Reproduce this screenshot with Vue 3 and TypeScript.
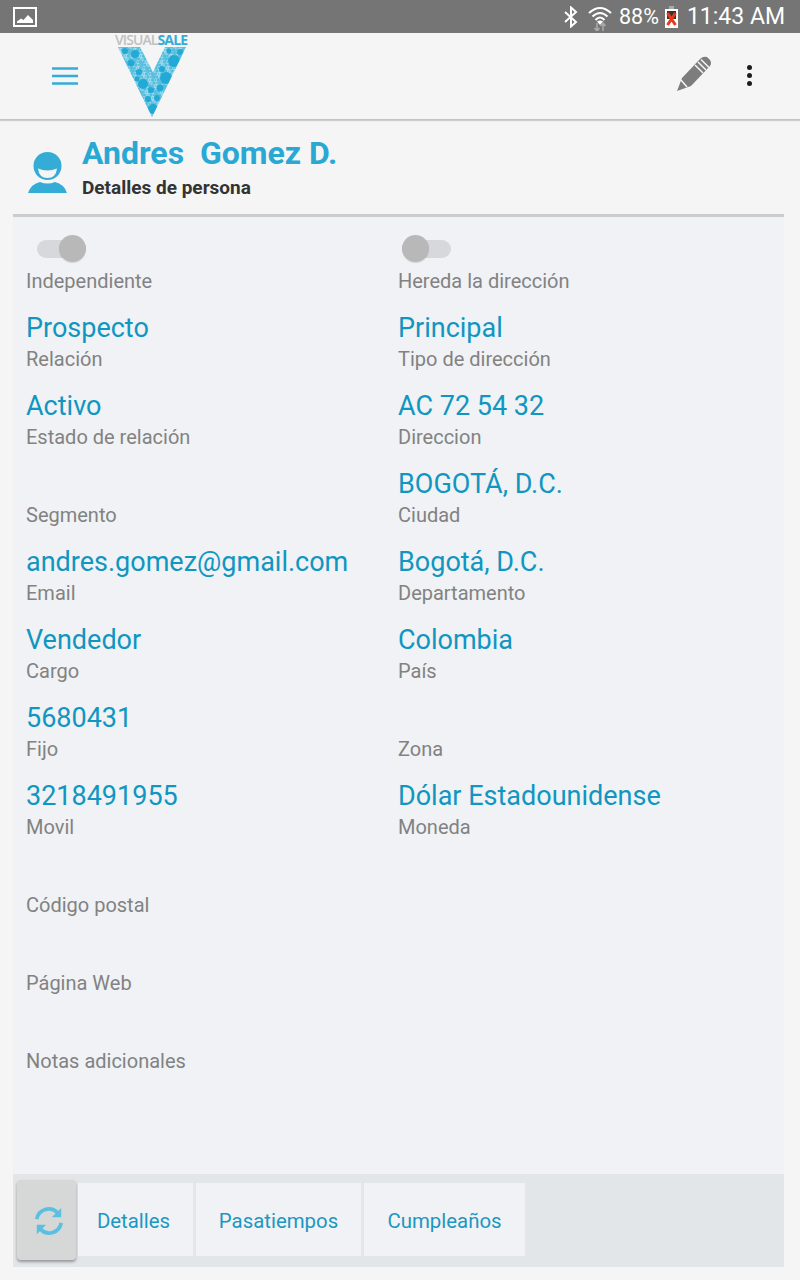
<template>
  <div class="screen">
    <div class="status-bar">
      <svg class="pic-icon" width="24" height="20" viewBox="0 0 24 20">
        <rect x="1" y="1" width="22" height="18" fill="none" stroke="#fff" stroke-width="2" />
        <path d="M4 16 L4 14.5 L8 11.5 L10.5 13 L15 8 L20 13 L20 16 Z" fill="#fff" />
      </svg>
      <div class="status-right">
        <svg width="14" height="22" viewBox="0 0 14 22">
          <path d="M1 6 L12 16 L7 20.5 L7 1.5 L12 6 L1 16" fill="none" stroke="#fff" stroke-width="2" />
        </svg>
        <svg class="wifi" width="24" height="26" viewBox="0 0 24 26">
          <path d="M1 8 Q12 -2 23 8 M4.5 11.5 Q12 4.5 19.5 11.5 M7.5 15 Q12 10 16.5 15" fill="none" stroke="#fff" stroke-width="2" />
          <path d="M12 20 L9 16.5 Q12 14.5 15 16.5 Z" fill="#fff" />
          <path d="M9 18 V26 M6.5 23 L9 26 L11.5 23 M15 26 V18 M12.5 21 L15 18 L17.5 21" fill="none" stroke="#aaa" stroke-width="1.6" />
        </svg>
        <span class="pct">88%</span>
        <svg class="battery" width="13" height="22" viewBox="0 0 13 22">
          <rect x="4" y="0" width="5" height="3" fill="#aaa" />
          <rect x="0" y="3" width="13" height="19" fill="#fff" />
          <rect x="2" y="5" width="9" height="8" fill="#333" />
          <path d="M2.5 7 L10.5 19 M10.5 7 L2.5 19" stroke="#e8391c" stroke-width="3" />
        </svg>
        <span class="clock">11:43 AM</span>
      </div>
    </div>

    <header class="toolbar">
      <div class="toolbar-left">
        <svg class="menu" width="26" height="18" viewBox="0 0 26 18">
          <path d="M0 1.5 H26 M0 9 H26 M0 16.5 H26" stroke="#35acd6" stroke-width="2.6" />
        </svg>
        <div class="logo">
          <div class="logo-text"><span class="grey">VISUAL</span><span class="blue">SALE</span></div>
          <svg width="74" height="72" viewBox="0 15 74 72">
            <defs>
              <clipPath id="v-shape">
                <polygon :points="vPoints" />
              </clipPath>
            </defs>
            <polygon :points="vPoints" fill="#a8dcec" />
            <g clip-path="url(#v-shape)">
              <circle v-for="(b, i) in bubbles" :key="i" :cx="b.x" :cy="b.y" :r="b.r" :fill="b.r > 2 ? '#22a9d6' : '#56bedf'" />
            </g>
          </svg>
        </div>
      </div>
      <div class="toolbar-right">
        <svg width="36" height="36" viewBox="0 0 36 36">
          <path d="M1 35 L6 22 L24 3 Q27 0 31 1 L34 4 Q36 7 34 10 L15 30 Z" fill="#7d7d7d" />
          <path d="M5 24 L11 31 M19 9 L27 17 M22 6 L30 14 M25 3.5 L33 11.5" stroke="#f5f5f5" stroke-width="1.5" fill="none" />
        </svg>
        <div class="dots"><i></i><i></i><i></i></div>
      </div>
    </header>

    <div class="title-row">
      <svg class="avatar" width="42" height="44" viewBox="0 0 42 44">
        <circle cx="21.5" cy="15" r="14" fill="#35acd6" />
        <path d="M12 17.5 Q21.5 21.5 31 17.5 Q30 27 21.5 27 Q13 27 12 17.5 Z" fill="#f5f5f5" />
        <path d="M2 42 Q5 33 14 31 Q21.5 34 29 31 Q38 33 41 42 Z" fill="#35acd6" />
      </svg>
      <div>
        <h1>Andres&nbsp; Gomez D.</h1>
        <p>Detalles de persona</p>
      </div>
    </div>

    <main class="panel">
      <div class="fields">
        <div class="column">
          <div class="switch-row"><span class="switch on"><i></i></span></div>
          <div class="label first">Independiente</div>
          <div v-for="f in leftFields" :key="f.label" class="field">
            <div class="value">{{ f.value }}</div>
            <div class="label">{{ f.label }}</div>
          </div>
        </div>
        <div class="column">
          <div class="switch-row"><span class="switch off"><i></i></span></div>
          <div class="label first">Hereda la dirección</div>
          <div v-for="f in rightFields" :key="f.label" class="field">
            <div class="value">{{ f.value }}</div>
            <div class="label">{{ f.label }}</div>
          </div>
        </div>
      </div>
      <nav class="tabs">
        <button class="refresh">
          <svg width="30" height="32" viewBox="0 0 32 34">
            <path d="M3 15 A13 13 0 0 1 25 8" fill="none" stroke="#5bbfe0" stroke-width="4" />
            <path d="M29 3 V13 H19 Z" fill="#5bbfe0" />
            <path d="M29 19 A13 13 0 0 1 7 26" fill="none" stroke="#5bbfe0" stroke-width="4" />
            <path d="M3 31 V21 H13 Z" fill="#5bbfe0" />
          </svg>
        </button>
        <button v-for="t in tabs" :key="t.name" class="tab" :style="{ width: t.width + 'px' }">{{ t.name }}</button>
      </nav>
    </main>
  </div>
</template>

<script setup lang="ts">
interface Field {
  value: string
  label: string
}

const leftFields: Field[] = [
  { value: 'Prospecto', label: 'Relación' },
  { value: 'Activo', label: 'Estado de relación' },
  { value: '', label: 'Segmento' },
  { value: 'andres.gomez@gmail.com', label: 'Email' },
  { value: 'Vendedor', label: 'Cargo' },
  { value: '5680431', label: 'Fijo' },
  { value: '3218491955', label: 'Movil' },
  { value: '', label: 'Código postal' },
  { value: '', label: 'Página Web' },
  { value: '', label: 'Notas adicionales' },
]

const rightFields: Field[] = [
  { value: 'Principal', label: 'Tipo de dirección' },
  { value: 'AC 72 54 32', label: 'Direccion' },
  { value: 'BOGOTÁ, D.C.', label: 'Ciudad' },
  { value: 'Bogotá, D.C.', label: 'Departamento' },
  { value: 'Colombia', label: 'País' },
  { value: '', label: 'Zona' },
  { value: 'Dólar Estadounidense', label: 'Moneda' },
]

const tabs = [
  { name: 'Detalles', width: 115 },
  { name: 'Pasatiempos', width: 165 },
  { name: 'Cumpleaños', width: 161 },
]

const vPoints = '3,15 25,15 38,40 50,15 71,15 37,85'

// burbujas del logo: las grandes a mano, las pequeñas en rejilla
const big = [
  { x: 20, y: 22, r: 4 }, { x: 59, y: 29, r: 6 }, { x: 16, y: 31, r: 3.5 }, { x: 51, y: 46, r: 6 },
  { x: 28, y: 52, r: 5 }, { x: 36, y: 58, r: 3 }, { x: 45, y: 56, r: 3.5 }, { x: 38, y: 77, r: 5 },
  { x: 42, y: 66, r: 3 }, { x: 33, y: 67, r: 3 }, { x: 65, y: 20, r: 3 }, { x: 24, y: 40, r: 3 },
  { x: 10, y: 19, r: 3 }, { x: 54, y: 19, r: 2.5 }, { x: 47, y: 37, r: 3 }, { x: 22, y: 47, r: 2.5 },
]
const small: { x: number; y: number; r: number }[] = []
for (let row = 0; row < 24; row++) {
  for (let col = 0; col < 25; col++) {
    small.push({ x: col * 3 + (row % 2) * 1.5, y: 15 + row * 3, r: 0.8 + ((row * 7 + col * 13) % 5) * 0.3 })
  }
}
const bubbles = [...small, ...big]
</script>

<style>
html, body {
  margin: 0;
  background: #f5f5f5;
}
</style>

<style scoped>
.screen {
  width: 800px;
  height: 1280px;
  background: #f5f5f5;
  font-family: Roboto, "Liberation Sans", sans-serif;
  overflow: hidden;
  display: flex;
  flex-direction: column;
}
.status-bar {
  height: 33px;
  flex: none;
  background: #757575;
  display: flex;
  align-items: center;
  justify-content: space-between;
  padding: 0 15px 0 13px;
  color: #fff;
}
.status-right { display: flex; align-items: center; }
.wifi { margin-left: 10px; margin-top: 3px; }
.pct { font-size: 21.5px; margin-left: 7px; }
.battery { margin-left: 6px; }
.clock { font-size: 23px; margin-left: 9px; }
.toolbar {
  height: 86px;
  flex: none;
  background: #f5f5f5;
  border-bottom: 1px solid #c4c4c4;
  box-shadow: 0 1px 1px rgba(0, 0, 0, 0.16);
  display: flex;
  justify-content: space-between;
  align-items: flex-start;
  position: relative;
}
.toolbar-left { display: flex; align-items: flex-start; }
.menu { margin: 34px 0 0 52px; }
.logo { margin-left: 37px; width: 74px; }
.logo svg { display: block; }
.logo-text {
  height: 14px;
  line-height: 14px;
  font-size: 14px;
  font-family: "Open Sans", sans-serif;
  letter-spacing: -0.9px;
  white-space: nowrap;
  margin-left: 0;
}
.logo-text .grey { color: #c0c0c0; font-weight: 600; }
.logo-text .blue { color: #35acd6; font-weight: 700; }
.toolbar-right { display: flex; align-items: flex-start; padding: 23px 48px 0 0; }
.dots { display: flex; flex-direction: column; gap: 3px; margin: 9px 0 0 35px; }
.dots i { display: block; width: 5px; height: 5px; border-radius: 50%; background: #1c1c1c; }
.title-row {
  height: 94px;
  flex: none;
  display: flex;
  padding: 14px 0 0 26px;
  box-sizing: border-box;
  gap: 14px;
}
.avatar { margin-top: 17px; }
h1 { margin: 0; font-size: 32px; line-height: 38px; font-weight: 700; color: #2aa8d4; white-space: pre; }
p { margin: 4px 0 0; font-size: 19px; line-height: 24px; font-weight: 700; color: #333; }
.panel {
  margin: 0 16px 0 13px;
  height: 1053px;
  flex: none;
  box-sizing: border-box;
  border-top: 3px solid #ccc;
  background: #f0f2f5;
  display: flex;
  flex-direction: column;
}
.fields {
  flex: 1;
  display: grid;
  grid-template-columns: 372px 1fr;
  padding-left: 13px;
}
.switch-row { height: 51px; position: relative; }
.switch {
  position: absolute;
  top: 23px;
  width: 49px;
  height: 18px;
  border-radius: 9px;
  background: #d6d8dc;
}
.switch.on { left: 11px; }
.switch.off { left: 4px; }
.switch i {
  position: absolute;
  left: 0;
  top: -5px;
  width: 27px;
  height: 27px;
  border-radius: 50%;
  background: #b8b8b8;
  box-shadow: 0 1px 1px rgba(0, 0, 0, 0.12);
}
.switch.on i { left: 22px; }
.label { font-size: 20px; line-height: 26px; color: #828282; }
.label.first { margin-bottom: 14px; }
.field { height: 78px; }
.value { font-size: 27px; line-height: 40px; height: 38px; color: #0f96c1; white-space: nowrap; }
.tabs {
  height: 93px;
  flex: none;
  background: #e3e6e9;
  display: flex;
  align-items: center;
  padding-left: 4px;
  gap: 3px;
}
.refresh {
  width: 59px;
  height: 80px;
  margin: -1px -1px 0 0;
  border: none;
  border-radius: 4px;
  background: #d6d8d8;
  box-shadow: 0 2px 3px rgba(0, 0, 0, 0.35);
  display: flex;
  align-items: center;
  justify-content: center;
  padding: 2px 0 0 5px;
  box-sizing: border-box;
}
.tab {
  height: 73px;
  margin-top: -2px;
  border: none;
  padding: 2px 0 0;
  background: #f0f2f5;
  color: #1c97c2;
  font-family: inherit;
  font-size: 20.4px;
}
.refresh + .tab { padding-right: 4px; }
</style>
